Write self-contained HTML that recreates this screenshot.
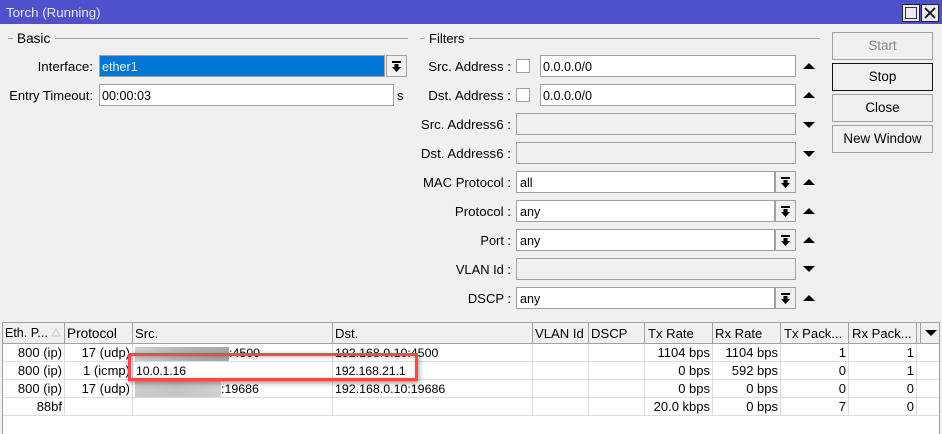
<!DOCTYPE html>
<html><head><meta charset="utf-8"><style>
html,body{margin:0;padding:0;width:942px;height:434px;overflow:hidden;background:#f0f0f0}
body{position:relative;font:13px "Liberation Sans",sans-serif;color:#000}
div,svg{position:absolute;box-sizing:border-box}
.t{white-space:nowrap;line-height:16px}
.l{white-space:nowrap;line-height:16px;text-align:right;width:130px;margin-top:1px;font-size:13.3px}
.i{height:22px;border:1px solid #a0a0a0;background:#fff;line-height:22px;padding-left:2px;white-space:nowrap;font-size:12.6px}
.p{padding-left:3px}
.d{background:#f0f0f0}
.b{width:21px;height:22px;border:1px solid #a0a0a0;background:#f0f0f0}
.hr{height:1px;background:#a0a0a0;top:38px}
.btn{left:832px;width:101px;height:28px;border:1px solid #a0a0a0;background:#f0f0f0;text-align:center;line-height:26px;font-size:13.400px}
.v{top:344px;width:1px;height:72px;background:#dcdcdc}
.vh{top:323px;width:1px;height:21px;background:#a0a0a0}
.h{top:323px;height:22px;line-height:21px;white-space:nowrap;font-size:13.100px}
.r{height:1px;left:3px;width:936px;background:#dcdcdc}
.c{line-height:18px;white-space:nowrap;height:18px;font-size:13px}
.n{font-size:12.400px}
.ra{text-align:right}
</style></head><body>
<div style="left:0;top:0;width:942px;height:24px;background:#4f50cb"></div>
<div class="t" style="left:6px;top:5px;color:#e6e6f5;font-size:13.300px">Torch (Running)</div>
<div style="left:902px;top:4px;width:18px;height:18px;background:#ece9f0;border:1px solid #222"></div>
<div style="left:905px;top:7px;width:12px;height:12px;border:1px solid #333"></div>
<div style="left:921px;top:4px;width:18px;height:18px;background:#ece9f0;border:1px solid #222"></div>
<svg style="left:921px;top:4px" width="18" height="18"><path d="M4 4L14 14M14 4L4 14" stroke="#111" stroke-width="1.8" fill="none"/></svg>

<div class="hr" style="left:8px;width:5px"></div>
<div class="t" style="left:17px;top:31px;font-size:13.600px">Basic</div>
<div class="hr" style="left:55px;width:353px"></div>
<div class="hr" style="left:420px;width:5px"></div>
<div class="t" style="left:429px;top:31px">Filters</div>
<div class="hr" style="left:469px;width:351px"></div>

<div class="l" style="left:-37px;top:58px">Interface:</div>
<div class="i" style="left:99px;top:55px;width:286px;background:#0078d7;color:#e8f2fb;border-color:#a0a0a0">ether1</div>
<div class="b" style="left:386px;top:55px"></div>
<svg style="left:386px;top:55px" width="21" height="22"><path d="M6 6h9v2H6zM8.500 9h4v3H15l-4.500 5L6 12h2.500z" fill="#000"/></svg>
<div class="l" style="left:-37px;top:87px;font-size:13px">Entry Timeout:</div>
<div class="i" style="left:99px;top:84px;width:295px">00:00:03</div>
<div class="t" style="left:397px;top:88px">s</div>

<div class="l" style="left:381px;top:58px">Src. Address :</div>
<div class="l" style="left:381px;top:87px">Dst. Address :</div>
<div class="l" style="left:381px;top:116px">Src. Address6 :</div>
<div class="l" style="left:381px;top:145px">Dst. Address6 :</div>
<div class="l" style="left:381px;top:174px;font-size:13.100px">MAC Protocol :</div>
<div class="l" style="left:381px;top:203px">Protocol :</div>
<div class="l" style="left:381px;top:232px;font-size:12.800px">Port :</div>
<div class="l" style="left:381px;top:261px;font-size:12.900px">VLAN Id :</div>
<div class="l" style="left:381px;top:290px;font-size:13px">DSCP :</div>

<div style="left:516px;top:59px;width:14px;height:14px;border:1px solid #a0a0a0;background:#fff"></div>
<div style="left:516px;top:88px;width:14px;height:14px;border:1px solid #a0a0a0;background:#fff"></div>
<div class="i" style="left:540px;top:55px;width:256px">0.0.0.0/0</div>
<div class="i" style="left:540px;top:84px;width:256px">0.0.0.0/0</div>
<div class="i d" style="left:516px;top:113px;width:280px"></div>
<div class="i d" style="left:516px;top:142px;width:280px"></div>
<div class="i p" style="left:516px;top:171px;width:259px">all</div>
<div class="i p" style="left:516px;top:200px;width:259px">any</div>
<div class="i p" style="left:516px;top:229px;width:259px">any</div>
<div class="i d" style="left:516px;top:258px;width:280px"></div>
<div class="i p" style="left:516px;top:287px;width:259px">any</div>

<div class="b" style="left:775px;top:171px"></div>
<div class="b" style="left:775px;top:200px"></div>
<div class="b" style="left:775px;top:229px"></div>
<div class="b" style="left:775px;top:287px"></div>
<svg style="left:775px;top:171px" width="21" height="22"><path d="M6 6h9v2H6zM8.500 9h4v3H15l-4.500 5L6 12h2.500z"/></svg>
<svg style="left:775px;top:200px" width="21" height="22"><path d="M6 6h9v2H6zM8.500 9h4v3H15l-4.500 5L6 12h2.500z"/></svg>
<svg style="left:775px;top:229px" width="21" height="22"><path d="M6 6h9v2H6zM8.500 9h4v3H15l-4.500 5L6 12h2.500z"/></svg>
<svg style="left:775px;top:287px" width="21" height="22"><path d="M6 6h9v2H6zM8.500 9h4v3H15l-4.500 5L6 12h2.500z"/></svg>

<svg style="left:803px;top:63px" width="12" height="6"><path d="M6 0L12 6H0z"/></svg>
<svg style="left:803px;top:92px" width="12" height="6"><path d="M6 0L12 6H0z"/></svg>
<svg style="left:803px;top:122px" width="12" height="6"><path d="M0 0H12L6 6z"/></svg>
<svg style="left:803px;top:151px" width="12" height="6"><path d="M0 0H12L6 6z"/></svg>
<svg style="left:803px;top:179px" width="12" height="6"><path d="M6 0L12 6H0z"/></svg>
<svg style="left:803px;top:208px" width="12" height="6"><path d="M6 0L12 6H0z"/></svg>
<svg style="left:803px;top:237px" width="12" height="6"><path d="M6 0L12 6H0z"/></svg>
<svg style="left:803px;top:266px" width="12" height="6"><path d="M0 0H12L6 6z"/></svg>
<svg style="left:803px;top:295px" width="12" height="6"><path d="M6 0L12 6H0z"/></svg>

<div class="btn" style="top:32px;color:#858585">Start</div>
<div class="btn" style="top:63px;border-color:#111">Stop</div>
<div class="btn" style="top:94px">Close</div>
<div class="btn" style="top:125px">New Window</div>

<div style="left:2px;top:322px;width:938px;height:112px;background:#fff;border:1px solid #a0a0a0;border-bottom:0"></div>
<div style="left:3px;top:323px;width:936px;height:20px;background:#f0f0f0"></div>
<div style="left:3px;top:343px;width:936px;height:1px;background:#a0a0a0"></div>
<div class="r" style="top:361px"></div>
<div class="r" style="top:379px"></div>
<div class="r" style="top:397px"></div>
<div class="r" style="top:415px"></div>

<div class="vh" style="left:64px"></div><div class="vh" style="left:132px"></div><div class="vh" style="left:332px"></div><div class="vh" style="left:532px"></div><div class="vh" style="left:588px"></div><div class="vh" style="left:644px"></div><div class="vh" style="left:712px"></div><div class="vh" style="left:780px"></div><div class="vh" style="left:848px"></div><div class="vh" style="left:916px"></div><div class="vh" style="left:920px"></div>
<div class="v" style="left:64px"></div><div class="v" style="left:132px"></div><div class="v" style="left:332px"></div><div class="v" style="left:532px"></div><div class="v" style="left:588px"></div><div class="v" style="left:644px"></div><div class="v" style="left:712px"></div><div class="v" style="left:780px"></div><div class="v" style="left:848px"></div><div class="v" style="left:916px"></div>

<div class="h" style="left:5px;font-size:12.500px">Eth. P...</div>
<svg style="left:51px;top:328px" width="10" height="9"><path d="M5 1L9 8H1z" fill="#f4f4f4" stroke="#c8c8c8" stroke-width="1"/></svg>
<div class="h" style="left:67px;font-size:13.600px">Protocol</div>
<div class="h" style="left:135px">Src.</div>
<div class="h" style="left:335px">Dst.</div>
<div class="h" style="left:535px">VLAN Id</div>
<div class="h" style="left:591px">DSCP</div>
<div class="h" style="left:648px">Tx Rate</div>
<div class="h" style="left:715px">Rx Rate</div>
<div class="h" style="left:784px">Tx Pack...</div>
<div class="h" style="left:852px">Rx Pack...</div>
<svg style="left:925px;top:330px" width="12" height="6"><path d="M0 0H12L6 6z"/></svg>

<div style="left:135px;top:347px;width:94px;height:14px;background:linear-gradient(90deg,#d0d0d0,#b4b4b4 55%,#a8a8a8)"></div>
<div style="left:135px;top:381px;width:86px;height:16px;background:linear-gradient(90deg,#cccccc,#c4c4c4 50%,#d2d2d2)"></div>

<div class="c ra" style="left:3px;top:344px;width:59px">800 (ip)</div>
<div class="c ra" style="left:3px;top:362px;width:59px">800 (ip)</div>
<div class="c ra" style="left:3px;top:380px;width:59px">800 (ip)</div>
<div class="c ra" style="left:3px;top:398px;width:59px">88bf</div>
<div class="c ra" style="left:65px;top:344px;width:65px">17 (udp)</div>
<div class="c ra" style="left:65px;top:362px;width:65px">1 (icmp)</div>
<div class="c ra" style="left:65px;top:380px;width:65px">17 (udp)</div>
<div class="c n" style="left:229px;top:344px">:4500</div>
<div class="c n" style="left:136px;top:362px;letter-spacing:-.2px">10.0.1.16</div>
<div class="c n" style="left:221px;top:380px">:19686</div>
<div class="c n" style="left:335px;top:344px">192.168.0.10:4500</div>
<div class="c n" style="left:335px;top:362px;letter-spacing:-.15px">192.168.21.1</div>
<div class="c n" style="left:335px;top:380px">192.168.0.10:19686</div>

<div class="c ra" style="left:645px;top:344px;width:65px">1104 bps</div>
<div class="c ra" style="left:645px;top:362px;width:65px">0 bps</div>
<div class="c ra" style="left:645px;top:380px;width:65px">0 bps</div>
<div class="c ra" style="left:645px;top:398px;width:65px">20.0 kbps</div>
<div class="c ra" style="left:713px;top:344px;width:65px">1104 bps</div>
<div class="c ra" style="left:713px;top:362px;width:65px">592 bps</div>
<div class="c ra" style="left:713px;top:380px;width:65px">0 bps</div>
<div class="c ra" style="left:713px;top:398px;width:65px">0 bps</div>
<div class="c ra" style="left:781px;top:344px;width:65px">1</div>
<div class="c ra" style="left:781px;top:362px;width:65px">0</div>
<div class="c ra" style="left:781px;top:380px;width:65px">0</div>
<div class="c ra" style="left:781px;top:398px;width:65px">7</div>
<div class="c ra" style="left:849px;top:344px;width:65px">1</div>
<div class="c ra" style="left:849px;top:362px;width:65px">1</div>
<div class="c ra" style="left:849px;top:380px;width:65px">0</div>
<div class="c ra" style="left:849px;top:398px;width:65px">0</div>

<div style="left:128px;top:353px;width:290px;height:28px;border:3px solid #f6474e;box-shadow:1px 2px 5px rgba(0,0,0,.4),inset 1px 1px 4px rgba(0,0,0,.25)"></div>
</body></html>
